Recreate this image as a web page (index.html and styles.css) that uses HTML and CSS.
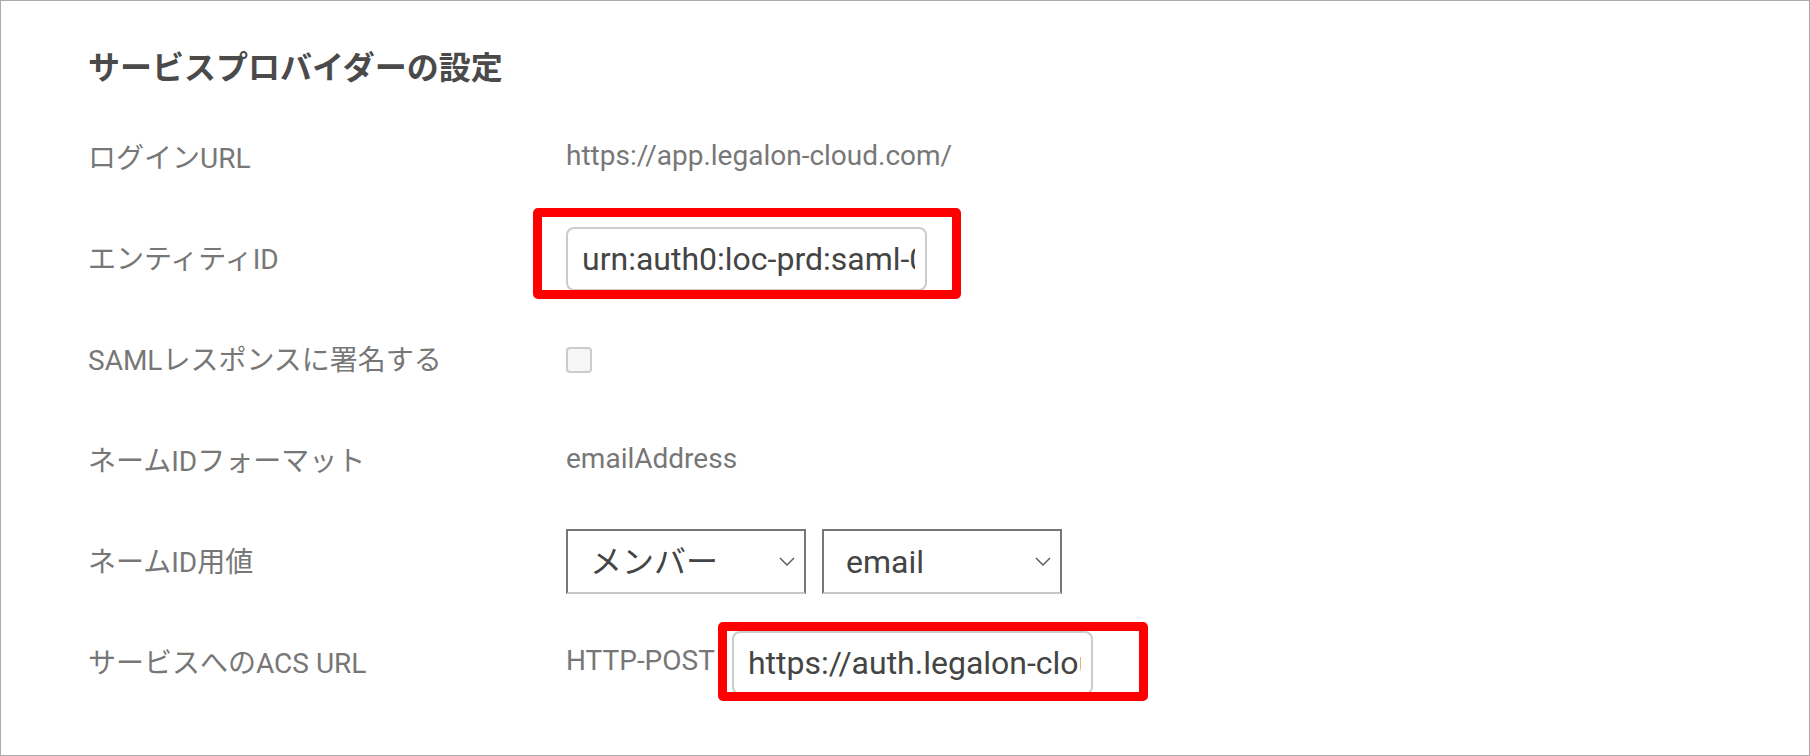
FILE: index.html
```html
<!DOCTYPE html>
<html lang="ja">
<head>
    <meta charset="UTF-8">
    <meta name="viewport" content="width=device-width, initial-scale=1.0">
    <title>サービスプロバイダーの設定</title>
    <link rel="stylesheet" href="styles.css">
</head>
<body>

    <!-- Service provider settings panel -->
    <div class="panel">
        <h2 class="panel-title">サービスプロバイダーの設定</h2>

        <div class="settings">
            <div class="row">
                <div class="label">ログインURL</div>
                <div class="value text">https://app.legalon-cloud.com/</div>
            </div>

            <div class="row">
                <div class="label">エンティティID</div>
                <div class="value">
                    <div class="field-wrap">
                        <input class="text-field" type="text" value="urn:auth0:loc-prd:saml-0a1b2c3d4e5f" readonly>
                        <span class="mark mark-entity"></span>
                    </div>
                </div>
            </div>

            <div class="row">
                <div class="label">SAMLレスポンスに署名する</div>
                <div class="value">
                    <input class="check" type="checkbox">
                </div>
            </div>

            <div class="row">
                <div class="label">ネームIDフォーマット</div>
                <div class="value text">emailAddress</div>
            </div>

            <div class="row">
                <div class="label">ネームID用値</div>
                <div class="value selects">
                    <select class="dropdown">
                        <option>メンバー</option>
                    </select>
                    <select class="dropdown">
                        <option>email</option>
                    </select>
                </div>
            </div>

            <div class="row">
                <div class="label">サービスへのACS URL</div>
                <div class="value acs">
                    <span class="binding">HTTP-POST</span>
                    <div class="field-wrap">
                        <input class="text-field" type="text" value="https://auth.legalon-cloud.com/login/callback" readonly>
                        <span class="mark mark-acs"></span>
                    </div>
                </div>
            </div>
        </div>
    </div>

</body>
</html>
```

FILE: styles.css
```css
/* General Reset */
* {
    margin: 0;
    padding: 0;
    box-sizing: border-box;
}

body {
    font-family: Roboto, "Noto Sans CJK JP", sans-serif;
    background: #fff;
    color: #777;
}

/* Panel */
.panel {
    height: 756px;
    border: 1px solid #aaa;
    padding: 47px 0 0 87px;
}

.panel-title {
    font-size: 32px;
    line-height: 40px;
    font-weight: bold;
    color: #4a4a4a;
    margin-bottom: 19px;
}

/* Settings rows */
.row {
    display: grid;
    grid-template-columns: 478px 1fr;
    align-items: center;
    height: 101px;
}

.label,
.value {
    font-size: 28px;
    color: #777;
}

/* plain text sits a touch higher than the line box centre */
.label,
.value.text,
.binding {
    padding-bottom: 4px;
}

.value {
    display: flex;
    align-items: center;
}

/* Text inputs */
.field-wrap {
    position: relative;
}

.text-field {
    display: block;
    width: 361px;
    height: 64px;
    padding: 0 10px 0 14px;
    border: 2px solid #ccc;
    border-radius: 8px;
    font-family: Roboto, sans-serif;
    font-size: 32px;
    color: #444;
    background: #fff;
    outline: none;
}

/* Red annotation boxes */
.mark {
    position: absolute;
    border: 9px solid #f00;
    border-radius: 5px;
    pointer-events: none;
}

.mark-entity {
    left: -33px;
    top: -19px;
    width: 428px;
    height: 91px;
}

.mark-acs {
    left: -14px;
    top: -9px;
    width: 430px;
    height: 79px;
}

/* Checkbox */
.check {
    appearance: none;
    width: 26px;
    height: 26px;
    border: 2px solid #ccc;
    border-radius: 4px;
    background: #f6f6f6;
}

/* Selects */
.selects {
    gap: 16px;
}

.dropdown {
    appearance: none;
    width: 240px;
    height: 65px;
    padding: 0 40px 0 22px;
    border: 2px solid #767676;
    border-bottom-color: #c8c8c8;
    border-radius: 0;
    font-family: Roboto, "Noto Sans CJK JP", sans-serif;
    font-size: 32px;
    color: #444;
    background: #fff url("data:image/svg+xml,%3Csvg xmlns='http://www.w3.org/2000/svg' width='16' height='9' viewBox='0 0 16 9'%3E%3Cpath d='M1 1l7 7 7-7' fill='none' stroke='%23555' stroke-width='1.4'/%3E%3C/svg%3E") no-repeat right 9px center;
}

/* ACS row */
.acs {
    gap: 17px;
}
```
